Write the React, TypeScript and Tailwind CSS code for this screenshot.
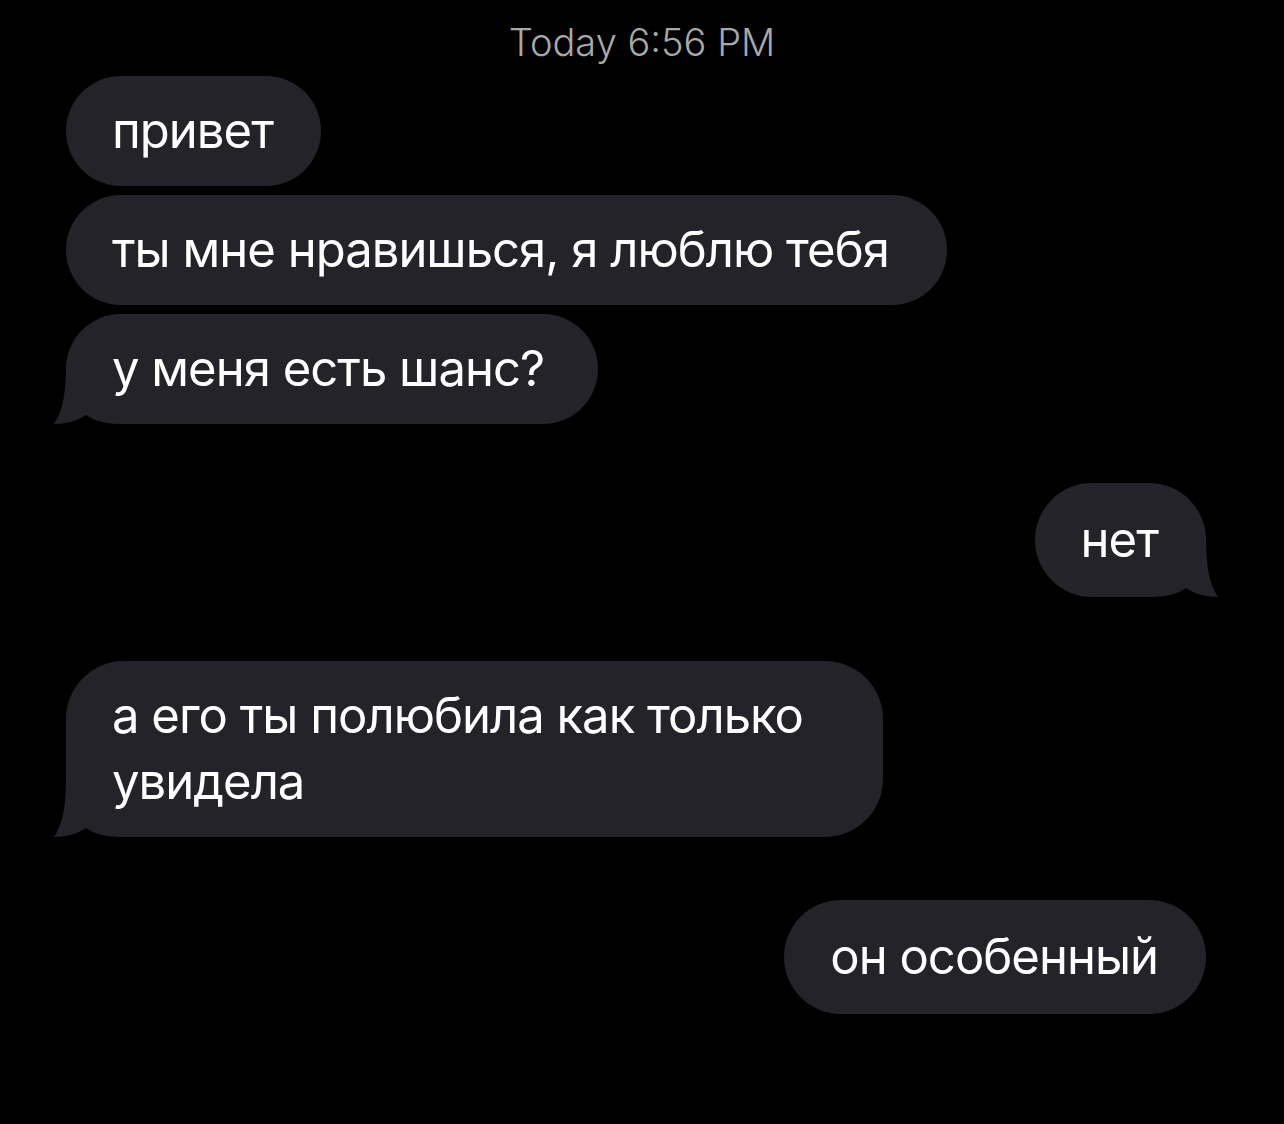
import React from "react";

type Msg = {
  lines: string[];
  side: "in" | "out";
  tail?: boolean;
  gap: string;
  pad?: string;
};

const messages: Msg[] = [
  { lines: ["привет"], side: "in", gap: "mt-[12px]" },
  { lines: ["ты мне нравишься, я люблю тебя"], side: "in", gap: "mt-[9px]", pad: "pr-[58px]" },
  { lines: ["у меня есть шанс?"], side: "in", tail: true, gap: "mt-[9px]", pad: "pr-[54px]" },
  { lines: ["нет"], side: "out", tail: true, gap: "mt-[59px]" },
  { lines: ["а его ты полюбила как только", "увидела"], side: "in", tail: true, gap: "mt-[64px]", pad: "pr-[80px]" },
  { lines: ["он особенный"], side: "out", gap: "mt-[63px]" },
];

// curled tail that fills the bottom corner of the last bubble in a group
const Tail = ({ side }: { side: "in" | "out" }) => (
  <svg
    viewBox="0 0 70 60"
    className={
      side === "in"
        ? "absolute bottom-0 left-[-12px] h-[60px] w-[70px]"
        : "absolute bottom-0 right-[-12px] h-[60px] w-[70px] -scale-x-100"
    }
  >
    <path
      d="M12 0 C12 28 9 47 0 60 C12 60 23 57 32 51 C40 57 52 60 70 60 L70 0 Z"
      fill="#25232a"
    />
  </svg>
);

const Bubble = ({ msg }: { msg: Msg }) => {
  const out = msg.side === "out";
  return (
    <div className={`flex ${out ? "justify-end pr-[78px]" : "justify-start pl-[66px]"} ${msg.gap}`}>
      <div
        className={`relative rounded-[58px] bg-[#25232a] ${out ? "py-[24px]" : "py-[22px]"} pl-[46px] ${msg.pad ?? "pr-[48px]"} text-[49px] leading-[66px] tracking-[-0.02em] whitespace-nowrap text-white`}
      >
        {msg.tail && <Tail side={msg.side} />}
        {msg.lines.map((line, i) => (
          <div key={i} className="relative">
            {line}
          </div>
        ))}
      </div>
    </div>
  );
};

export default function App() {
  return (
    <div className="min-h-[1124px] w-full bg-black font-['Inter','Liberation_Sans',sans-serif]">
      <div className="pt-[20px] text-center text-[38px] font-light leading-[44px] text-[#a8a8a8]">
        Today 6:56 PM
      </div>
      {messages.map((m, i) => (
        <Bubble key={i} msg={m} />
      ))}
    </div>
  );
}
